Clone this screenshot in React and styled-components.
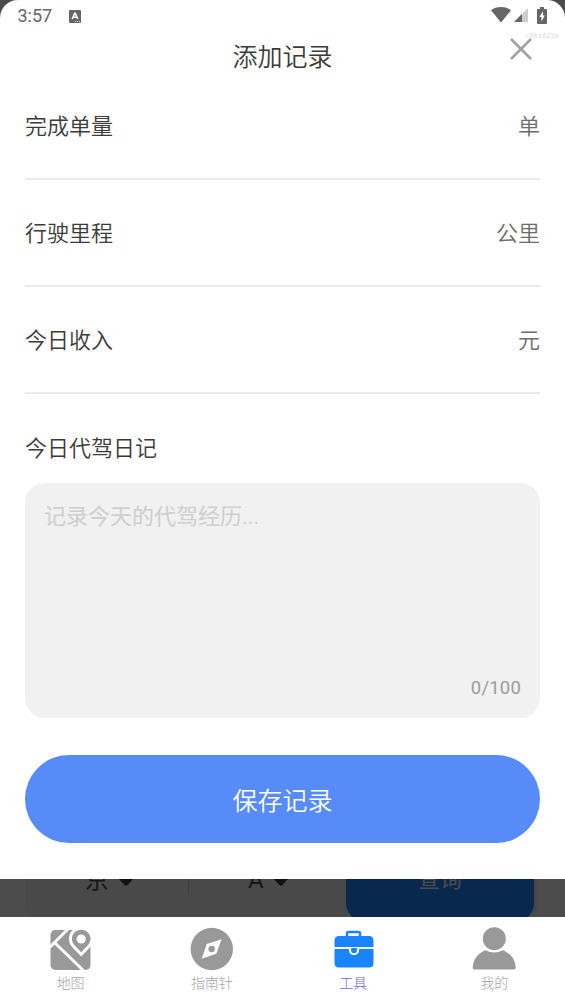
import React, { useState } from "react";
import styled, { createGlobalStyle } from "styled-components";

const GlobalStyle = createGlobalStyle`
  * {
    box-sizing: border-box;
  }

  body {
    margin: 0;
    background-color: #4c4c4c;
    font-family: Roboto, "Noto Sans CJK SC", sans-serif;
  }
`;

const Screen = styled.div`
  display: flex;
  flex-direction: column;
  width: 565px;
  height: 1004px;
  overflow: hidden;
  background-color: #4c4c4c;
`;

const Sheet = styled.section`
  position: relative;
  display: flex;
  flex-direction: column;
  flex: none;
  height: 879px;
  padding: 0 25px;
  border-radius: 18px 18px 0 0;
  background-color: #ffffff;
`;

const StatusBar = styled.div`
  display: flex;
  align-items: center;
  height: 32px;
  margin: 0 -25px;
  padding: 0 18px 0 17.5px;
  color: #666666;
`;

const Clock = styled.span`
  width: 51px;
  font-size: 18px;
  line-height: 32px;
`;

const StatusIcons = styled.div`
  display: flex;
  align-items: center;
  margin-left: auto;
  margin-top: -2px;
`;

const Title = styled.h1`
  height: 41px;
  margin: 0;
  font-size: 25px;
  font-weight: 350;
  line-height: 51px;
  text-align: center;
  color: #3a3a3a;
`;

const CloseButton = styled.button`
  position: absolute;
  top: 37px;
  right: 32px;
  width: 24px;
  height: 24px;
  padding: 0;
  border: 0;
  background: none;
  cursor: pointer;

  svg {
    display: block;
  }
`;

const Watermark = styled.span`
  position: absolute;
  top: 32px;
  right: 6px;
  font-family: "Liberation Mono", monospace;
  font-size: 7px;
  line-height: 9px;
  color: #dddddd;
`;

const Field = styled.label`
  display: flex;
  align-items: center;
  height: 107px;
  padding-bottom: 3px;
  border-bottom: 2px solid #ebebeb;
  font-size: 22px;
  font-weight: 350;
  color: #3a3a3a;
`;

const FieldInput = styled.input`
  flex: 1;
  min-width: 0;
  border: 0;
  outline: 0;
  background: none;
  font: inherit;
  text-align: right;
`;

const Unit = styled.span`
  color: #6c6c6c;
`;

const DiaryTitle = styled.h2`
  height: 89px;
  margin: 0;
  padding-top: 38px;
  font-size: 22px;
  font-weight: 350;
  line-height: 33px;
  color: #3a3a3a;
`;

const DiaryBox = styled.div`
  display: flex;
  flex-direction: column;
  height: 235px;
  padding: 17px 19px 14px;
  border-radius: 20px;
  background-color: #f1f1f1;
`;

const DiaryInput = styled.textarea`
  flex: 1;
  padding: 0;
  border: 0;
  outline: 0;
  resize: none;
  background: none;
  font-family: inherit;
  font-size: 22px;
  font-weight: 400;
  line-height: 34px;
  color: #333333;

  &::placeholder {
    color: #cecece;
  }
`;

const Counter = styled.span`
  font-size: 18.5px;
  line-height: 32px;
  text-align: right;
  letter-spacing: 0.2px;
  color: #9c9c9c;
`;

const SaveButton = styled.button`
  height: 88px;
  margin-top: 37px;
  border: 0;
  border-radius: 44px;
  background-color: #578bf8;
  font-family: inherit;
  font-size: 25px;
  font-weight: 350;
  color: #ffffff;
  cursor: pointer;
`;

const Backdrop = styled.div`
  display: flex;
  flex: none;
  height: 38px;
  padding: 0 31px 0 25px;
  overflow: hidden;
`;

const PlatePicker = styled.div`
  display: flex;
  flex: 1;
  height: 41px;
  border-radius: 0 0 0 18px;
  background-color: #494949;
`;

const PlateOption = styled.div`
  display: flex;
  width: ${({ $width }) => $width}px;
  padding-left: ${({ $indent }) => $indent}px;
  font-size: 24px;
  line-height: 34px;
  color: #161616;

  span {
    margin-top: -16px;
  }

  svg {
    margin-left: ${({ $gap }) => $gap}px;
  }
`;

const Divider = styled.div`
  width: 1px;
  height: 16px;
  background-color: #3c3c3c;
`;

const QueryButton = styled.div`
  width: 188px;
  height: 42px;
  border-radius: 0 0 18px 18px;
  background-color: #08284e;
  box-shadow: 2px 0 5px rgba(0, 0, 0, 0.12);
  font-size: 22px;
  line-height: 32px;
  text-align: center;
  color: #4c4c4c;

  span {
    display: block;
    margin-top: -15px;
  }
`;

const TabBar = styled.nav`
  display: flex;
  flex: 1;
  background-color: #ffffff;
`;

const Tab = styled.button`
  display: flex;
  flex: 1;
  flex-direction: column;
  align-items: center;
  padding: 9px 0 0;
  border: 0;
  background: none;
  font-family: inherit;
  font-size: 14px;
  font-weight: 300;
  line-height: 20px;
  color: ${({ $active }) => ($active ? "#7166fb" : "#a4a4a4")};
  cursor: pointer;

  svg {
    display: block;
    margin-bottom: 1px;
  }
`;

const KeyboardIcon = () => (
  <svg width="12" height="13" viewBox="0 0 12 13">
    <rect width="12" height="13" rx="1" fill="#666" />
    <path d="M3.2 9 5.7 3.2h.6L8.8 9M4.2 7.2h3.6" fill="none" stroke="#fff" strokeWidth="1.5" />
    <path d="M6 11.5h1M8 11.5h1M10 11.5h1" stroke="#fff" strokeWidth=".8" />
  </svg>
);

const WifiIcon = () => (
  <svg width="20" height="16" viewBox="0 0 20 16">
    <path d="M0 3.2C5.7-1 14.3-1 20 3.2L10 15.5Z" fill="#666" />
  </svg>
);

const SignalIcon = () => (
  <svg width="14" height="14" viewBox="0 0 14 14" style={{ marginLeft: 3 }}>
    <path d="M14 0v14H0Z" fill="#ccc" />
    <path d="M8 6v8H0Z" fill="#666" />
  </svg>
);

const BatteryIcon = () => (
  <svg width="10" height="17" viewBox="0 0 10 17" style={{ marginLeft: 9 }}>
    <path d="M3 0h4v2h2q1 0 1 1v13q0 1-1 1H1q-1 0-1-1V3q0-1 1-1h2Z" fill="#666" />
    <path d="M6 4.2 2.4 10h2v4.5L7.8 8.5H6Z" fill="#fff" />
  </svg>
);

const CloseIcon = () => (
  <svg width="24" height="24" viewBox="0 0 24 24">
    <path d="m2 2 20 20M22 2 2 22" stroke="#a2a2a2" strokeWidth="2.6" />
  </svg>
);

const CaretIcon = () => (
  <svg width="16" height="8" viewBox="0 0 16 8">
    <path d="M0-1h16L9.5 6q-1.5 1.6-3 0Z" fill="#111" />
  </svg>
);

const MapIcon = () => (
  <svg width="44" height="46" viewBox="0 0 44 46">
    <rect x="1.500" y="4" width="40" height="40" rx="5" fill="#999" />
    <path d="M20 2 0 22M6 17l30 29" stroke="#fff" strokeWidth="3" />
    <path
      d="M32.2 3.8c-5.3 0-9.300 4-9.300 9.200 0 4.500 3.800 7.500 9.300 13.200C37.700 20.500 41.500 17.500 41.500 13c0-5.200-4-9.200-9.300-9.200Z"
      fill="#999"
      stroke="#fff"
      strokeWidth="6"
      paintOrder="stroke"
    />
    <circle cx="32.2" cy="13" r="4.6" fill="#fff" />
  </svg>
);

const CompassIcon = () => (
  <svg width="44" height="46" viewBox="0 0 44 46">
    <circle cx="21.8" cy="23" r="21.2" fill="#999" />
    <path d="m31.6 13.2-5.3 14.5-14.6 5.1 5-14.8Z" fill="#fff" />
    <circle cx="21.6" cy="23" r="3.2" fill="#999" />
  </svg>
);

const ToolboxIcon = () => (
  <svg width="44" height="46" viewBox="0 0 44 46">
    <path d="M16 11V7.500q0-1.500 1.500-1.500h10q1.500 0 1.500 1.500V11" fill="none" stroke="#1a84ff" strokeWidth="2.5" />
    <path d="M8 10h30q4.500 0 4.500 5v6h-39v-6q0-5 4.500-5Z" fill="#1a84ff" />
    <path d="M3.5 23h39v14q0 4.500-4.500 4.500H8q-4.500 0-4.500-4.500Z" fill="#1a84ff" />
    <path d="M19 22v2.200a4 4 0 0 0 8 0V22" fill="#1a84ff" stroke="#fff" strokeWidth="2.200" />
  </svg>
);

const ProfileIcon = () => (
  <svg width="44" height="46" viewBox="0 0 44 46">
    <circle cx="22.3" cy="12.7" r="11.5" fill="#999" />
    <path d="M13.5 24.3q8.800 4.500 17.300 0C38 27 43.400 33 43.700 41.500q0 2-2 2H2.700q-2 0-2-2C1.200 33 6.300 27 13.500 24.300Z" fill="#999" />
  </svg>
);

const fields = [
  { label: "完成单量", unit: "单" },
  { label: "行驶里程", unit: "公里" },
  { label: "今日收入", unit: "元" },
];

const tabs = [
  { label: "地图", Icon: MapIcon },
  { label: "指南针", Icon: CompassIcon },
  { label: "工具", Icon: ToolboxIcon },
  { label: "我的", Icon: ProfileIcon },
];

export default function App() {
  const [diary, setDiary] = useState("");
  const [activeTab, setActiveTab] = useState("工具");

  return (
    <Screen>
      <GlobalStyle />
      <Sheet>
        <StatusBar>
          <Clock>3:57</Clock>
          <KeyboardIcon />
          <StatusIcons>
            <WifiIcon />
            <SignalIcon />
            <BatteryIcon />
          </StatusIcons>
        </StatusBar>
        <Title>添加记录</Title>
        <Watermark>c9e1623e</Watermark>
        <CloseButton aria-label="关闭">
          <CloseIcon />
        </CloseButton>
        {fields.map(({ label, unit }) => (
          <Field key={label}>
            {label}
            <FieldInput />
            <Unit>{unit}</Unit>
          </Field>
        ))}
        <DiaryTitle>今日代驾日记</DiaryTitle>
        <DiaryBox>
          <DiaryInput
            placeholder="记录今天的代驾经历..."
            maxLength={100}
            value={diary}
            onChange={(e) => setDiary(e.target.value)}
          />
          <Counter>{diary.length}/100</Counter>
        </DiaryBox>
        <SaveButton>保存记录</SaveButton>
      </Sheet>
      <Backdrop>
        <PlatePicker>
          <PlateOption $width={163} $indent={60} $gap={9}>
            <span>京</span>
            <CaretIcon />
          </PlateOption>
          <Divider />
          <PlateOption $width={157} $indent={59} $gap={9}>
            <span>A</span>
            <CaretIcon />
          </PlateOption>
        </PlatePicker>
        <QueryButton>
          <span>查询</span>
        </QueryButton>
      </Backdrop>
      <TabBar>
        {tabs.map(({ label, Icon }) => (
          <Tab key={label} $active={label === activeTab} onClick={() => setActiveTab(label)}>
            <Icon />
            {label}
          </Tab>
        ))}
      </TabBar>
    </Screen>
  );
}
